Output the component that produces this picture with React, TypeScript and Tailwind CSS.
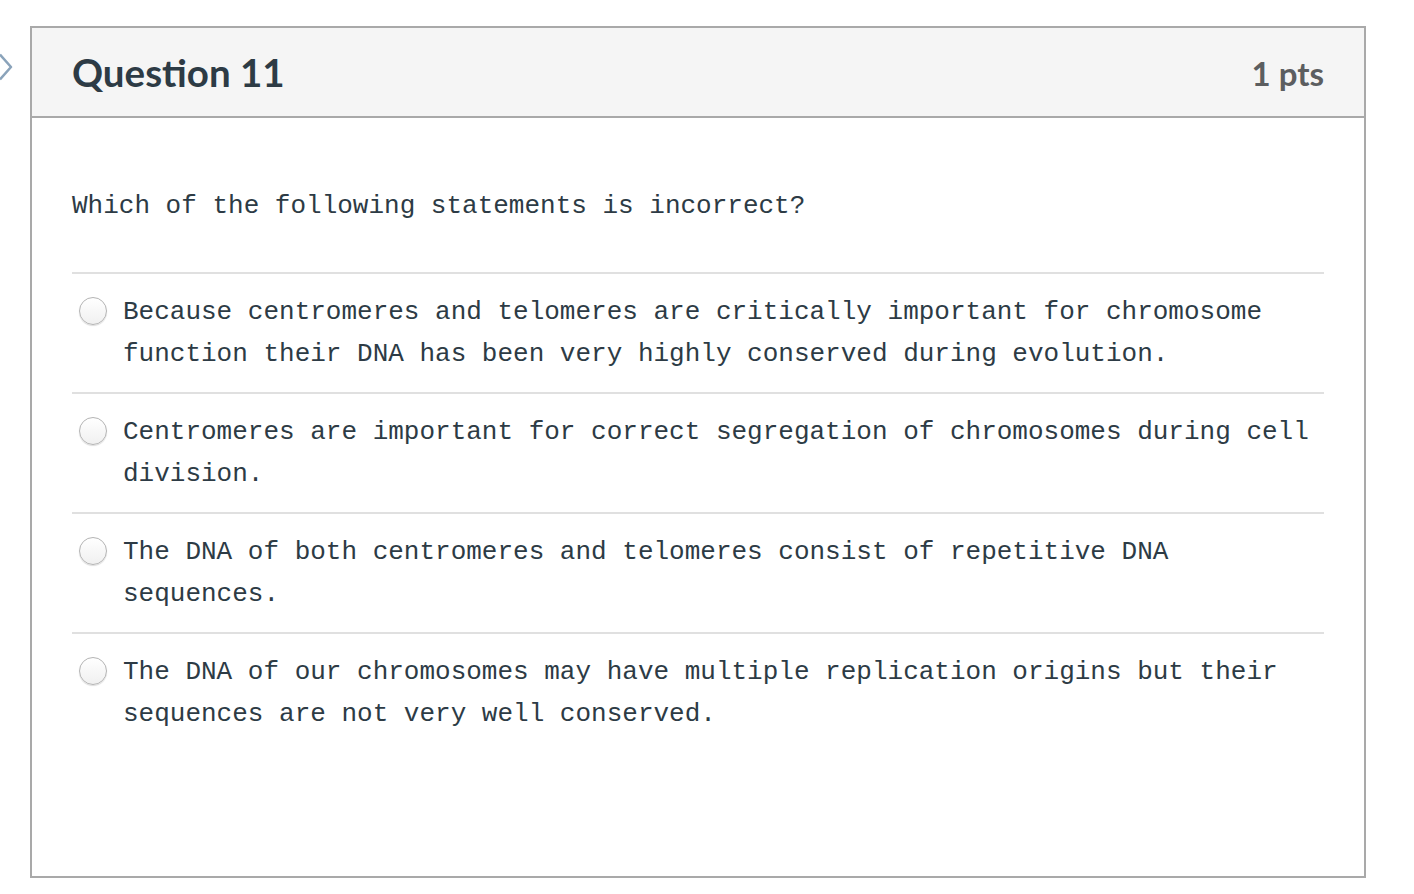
import React from "react";

const answers = [
  "Because centromeres and telomeres are critically important for chromosome function their DNA has been very highly conserved during evolution.",
  "Centromeres are important for correct segregation of chromosomes during cell division.",
  "The DNA of both centromeres and telomeres consist of repetitive DNA sequences.",
  "The DNA of our chromosomes may have multiple replication origins but their sequences are not very well conserved.",
];

function Radio() {
  return (
    <span className="mt-[6px] block h-[28px] w-[28px] shrink-0 rounded-full border border-[#b4b4b4] bg-gradient-to-b from-white to-[#f0f0f0] shadow-[0_1px_1px_rgba(0,0,0,0.14)]" />
  );
}

export default function App() {
  return (
    <div className="relative min-h-[894px] w-[1414px] bg-white pt-[26px] pl-[30px]">
      <svg
        className="absolute left-0 top-[53px]"
        width="16"
        height="30"
        viewBox="0 0 16 30"
        fill="none"
      >
        <path d="M0 1.5 L11 14 L0 26.5" stroke="#8aa3ba" strokeWidth="2.5" strokeLinejoin="round" />
      </svg>
      <div className="flex h-[852px] w-[1336px] flex-col border-2 border-[#a9a9a9] bg-white">
        <div className="flex h-[90px] items-center justify-between border-b-2 border-[#a9a9a9] bg-[#f5f5f5] pl-[40px] pr-[40px]">
          <h2 className="text-[38.5px] font-bold leading-none text-[#2d3b45] [font-family:Lato,'Noto_Sans',sans-serif]">
            Question 11
          </h2>
          <div className="pt-[2px] text-[33px] font-bold leading-none text-[#5c5e60] [font-family:Lato,'Noto_Sans',sans-serif]">
            1 pts
          </div>
        </div>
        <div className="px-[40px] pt-[67px] text-[26px] leading-[42px] text-[#2d3b45] [font-family:'Liberation_Mono','Courier_New',monospace]">
          <p>Which of the following statements is incorrect?</p>
          <div className="mt-[45px]">
            {answers.map((a, i) => (
              <div
                key={i}
                className="flex gap-[16px] border-t-2 border-[#e0e0e0] pl-[7px] pt-[17px] pb-[17px]"
              >
                <Radio />
                <span>{a}</span>
              </div>
            ))}
          </div>
        </div>
      </div>
    </div>
  );
}
